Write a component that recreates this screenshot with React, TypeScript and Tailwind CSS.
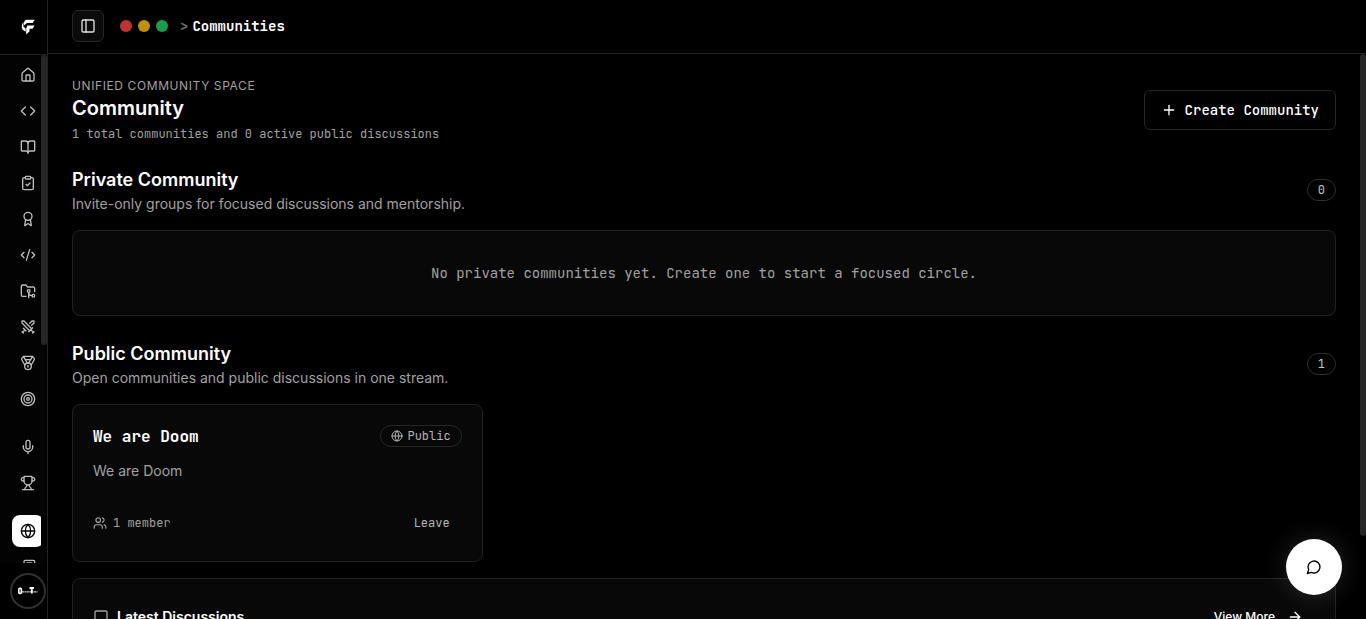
import type { ReactNode } from 'react';
import {
  ArrowRight, Award, BookOpen, ClipboardCheck, Code, CodeXml, FolderGit2, Globe, House, Medal,
  Mic, Newspaper, PanelLeft, Plus, Swords, Target, Trophy, Users,
} from 'lucide-react';

const mono = "font-['JetBrains_Mono','DejaVu_Sans_Mono',monospace]";

const groups = [
  [
    { label: 'Home', Icon: House },
    { label: 'Practice', Icon: Code },
    { label: 'Courses', Icon: BookOpen },
    { label: 'Assessments', Icon: ClipboardCheck },
    { label: 'Certificates', Icon: Award },
    { label: 'Editor', Icon: CodeXml },
    { label: 'Projects', Icon: FolderGit2 },
    { label: 'Battles', Icon: Swords },
    { label: 'Achievements', Icon: Medal },
    { label: 'Goals', Icon: Target },
  ],
  [
    { label: 'Interviews', Icon: Mic },
    { label: 'Leaderboard', Icon: Trophy },
  ],
  [
    { label: 'Communities', Icon: Globe, active: true },
    { label: 'News', Icon: Newspaper },
  ],
];

function Outline({ className, children }: { className: string; children: ReactNode }) {
  return (
    <svg
      viewBox="0 0 24 24"
      className={className}
      fill="none"
      stroke="currentColor"
      strokeWidth="2"
      strokeLinecap="round"
      strokeLinejoin="round"
      aria-hidden="true"
    >
      {children}
    </svg>
  );
}

function Sidebar() {
  return (
    <aside className="flex w-12 shrink-0 flex-col border-r border-[#222] bg-[#030303]">
      <a href="#" aria-label="Dashboard" className="flex h-[55px] shrink-0 items-center justify-center border-b border-[#222] bg-black pl-2">
        <svg viewBox="0 0 14 16" className="h-4 w-3.5 fill-white" aria-hidden="true">
          <path d="M5 .8H13.8L11.6 3.9H6L2.9 6.4V4.2C3.2 2.6 3.9 1.5 5 .8Z" />
          <path d="M2.4 3V7.4L4.6 9.6V12.8L1.4 10.6C.4 8.6.5 4.9 2.4 3Z" />
          <path d="M6.4 6.5H13.6L11.5 9.8H8.6L8.4 12.4 5.2 15.6V9.2Z" />
        </svg>
      </a>
      <div className="flex min-h-0 flex-1">
        <nav aria-label="Main" className="flex min-w-0 flex-1 flex-col gap-4 overflow-hidden pt-1 pl-3">
          {groups.map((group, i) => (
            <ul key={i} className="flex flex-col gap-1">
              {group.map(({ label, Icon, ...rest }) => (
                <li key={label}>
                  <a
                    href="#"
                    aria-label={label}
                    className={
                      'active' in rest
                        ? 'flex size-8 items-center justify-center rounded-lg bg-white text-black'
                        : 'flex size-8 items-center justify-center rounded-lg text-[#bdbdbd]'
                    }
                  >
                    <Icon className="size-4" />
                  </a>
                </li>
              ))}
            </ul>
          ))}
        </nav>
        <div className="w-1.5 shrink-0">
          <div className="h-[57%] rounded-full bg-[#262626]" />
        </div>
      </div>
      <div className="flex h-14 shrink-0 items-center justify-center bg-black pl-2">
        <button aria-label="Account" className="flex size-9 shrink-0 items-center justify-center rounded-full border-2 border-[#303030] bg-black">
          <svg viewBox="0 0 20 8" className="h-2 w-5" fill="none" stroke="#fff" aria-hidden="true">
            <rect x="0.8" y="1.4" width="2.6" height="5" rx="1" strokeWidth="1.6" />
            <path d="M11.5 1h4.5M13.8 1v5.5" strokeWidth="1.8" />
            <path d="M4 4.8h15.5" strokeWidth="1.2" strokeDasharray="2 .4" opacity=".8" />
          </svg>
        </button>
      </div>
    </aside>
  );
}

function SectionHeading({ title, text, count }: { title: string; text: string; count: number }) {
  return (
    <div className="flex items-center justify-between">
      <div>
        <h2 className="text-lg leading-7 font-semibold text-white">{title}</h2>
        <p className="text-sm text-[#a1a1a1]">{text}</p>
      </div>
      <span className={`${mono} rounded-full border border-[#2e2e2e] px-2.5 py-0.5 text-xs text-[#c4c4c4]`}>{count}</span>
    </div>
  );
}

export default function App() {
  return (
    <div className="flex h-screen overflow-hidden bg-black font-[Inter,sans-serif] text-white">
      <Sidebar />
      <div className="flex min-w-0 flex-1 flex-col">
        <header className="flex h-[54px] shrink-0 items-center border-b border-[#222] px-6 pb-px">
          <button aria-label="Toggle sidebar" className="flex size-8 items-center justify-center rounded-md border border-[#262626] bg-[#0b0b0b] text-[#e5e5e5]">
            <PanelLeft className="size-4" />
          </button>
          <div className="ml-4 flex gap-1.5" aria-hidden="true">
            <span className="size-3 rounded-full bg-[#bd3434]" />
            <span className="size-3 rounded-full bg-[#bf9008]" />
            <span className="size-3 rounded-full bg-[#1b9e4b]" />
          </div>
          <div className={`${mono} ml-3 flex gap-1 text-sm font-bold`}>
            <span className="text-[#737373]">&gt;</span>
            <h1 className="text-white">Communities</h1>
          </div>
        </header>

        <div className="flex min-h-0 flex-1">
          <main className="min-w-0 flex-1 overflow-hidden p-6">
            <div className="flex items-center justify-between">
              <div>
                <p className="text-xs tracking-wider text-[#a1a1a1] uppercase">Unified community space</p>
                <h2 className="text-xl leading-7 font-semibold">Community</h2>
                <p className={`${mono} mt-1 text-xs text-[#a1a1a1]`}>1 total communities and 0 active public discussions</p>
              </div>
              <button className={`${mono} flex h-10 items-center gap-2 rounded-md border border-[#262626] px-4 text-sm font-medium`}>
                <Plus className="size-4" />
                Create Community
              </button>
            </div>

            <section className="mt-6">
              <SectionHeading title="Private Community" text="Invite-only groups for focused discussions and mentorship." count={0} />
              <div className="mt-4 rounded-lg border border-[#222] bg-[#080808] p-8 text-center">
                <p className={`${mono} text-sm text-[#a1a1a1]`}>No private communities yet. Create one to start a focused circle.</p>
              </div>
            </section>

            <section className="mt-6">
              <SectionHeading title="Public Community" text="Open communities and public discussions in one stream." count={1} />
              <div className="mt-4 grid grid-cols-3 gap-4">
                <article className="rounded-lg border border-[#222] bg-[#080808] p-5">
                  <div className="flex items-start justify-between">
                    <h3 className={`${mono} text-base font-bold`}>We are Doom</h3>
                    <span className={`${mono} flex items-center gap-1 rounded-full border border-[#262626] px-2.5 py-0.5 text-xs text-[#b5b5b5]`}>
                      <Globe className="size-3" />
                      Public
                    </span>
                  </div>
                  <p className="mt-3 text-sm text-[#a1a1a1]">We are Doom</p>
                  <div className={`${mono} mt-6 flex items-center justify-between text-xs text-[#a1a1a1]`}>
                    <span className="flex items-center gap-1.5">
                      <Users className="size-3.5" />
                      1 member
                    </span>
                    <button className="h-9 px-3 text-[#b5b5b5]">Leave</button>
                  </div>
                </article>
              </div>
              <section className="mt-4 rounded-lg border border-[#222] bg-[#080808] p-5">
                <div className="flex items-center justify-between">
                  <h3 className="flex items-center gap-2 text-sm font-semibold">
                    <Outline className="size-4 text-[#a1a1a1]">
                      <path d="M21 15a2 2 0 0 1-2 2H7l-4 4V5a2 2 0 0 1 2-2h14a2 2 0 0 1 2 2z" />
                    </Outline>
                    Latest Discussions
                  </h3>
                  <button className="flex h-9 items-center gap-3 px-3 text-xs font-medium">
                    View More
                    <ArrowRight className="size-4" />
                  </button>
                </div>
              </section>
            </section>
          </main>
          <div className="w-1.5 shrink-0">
            <div className="h-[85.3%] rounded-full bg-[#262626]" />
          </div>
        </div>
      </div>
      <button
        aria-label="Open chat"
        className="fixed right-6 bottom-6 flex size-14 items-center justify-center rounded-full bg-white text-black shadow-[0_0_24px_rgba(255,255,255,0.15)]"
      >
        <Outline className="size-4">
          <path d="M7.9 20A9 9 0 1 0 4 16.1L2 22Z" />
        </Outline>
      </button>
    </div>
  );
}
